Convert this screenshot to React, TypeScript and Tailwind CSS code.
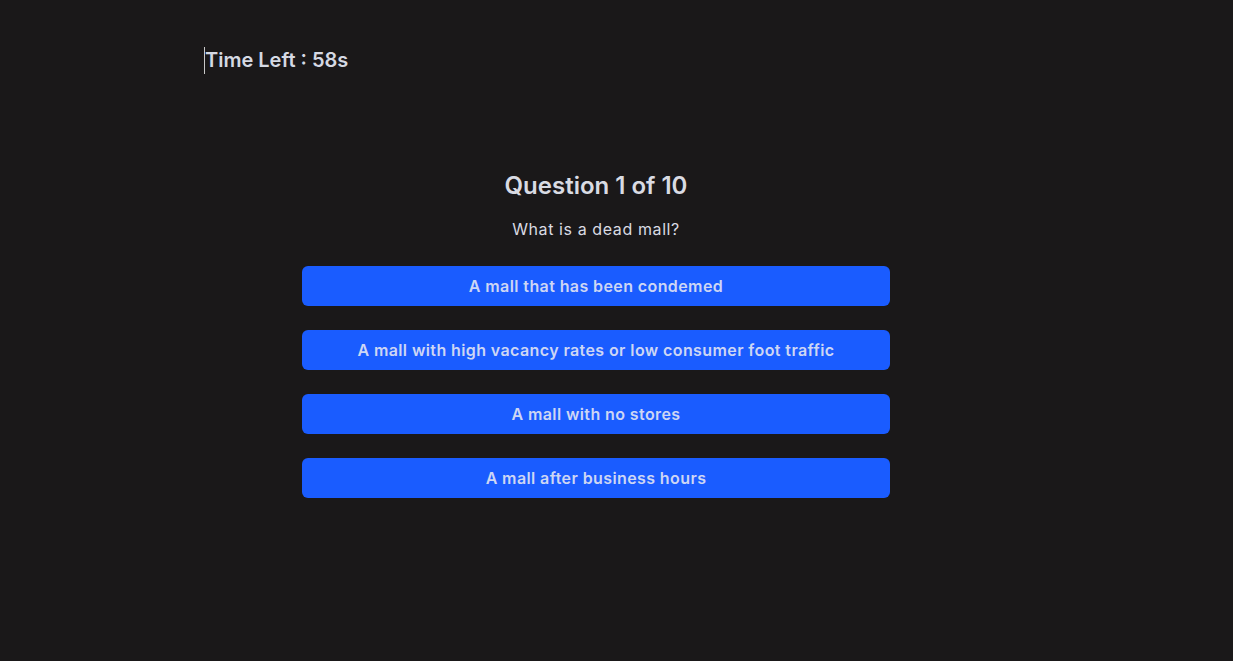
import React from "react";

const answers = [
  "A mall that has been condemed",
  "A mall with high vacancy rates or low consumer foot traffic",
  "A mall with no stores",
  "A mall after business hours",
];

export default function App() {
  return (
    <div
      className="min-h-[661px] w-full bg-[#1a1819] text-[#d9dbe3]"
      style={{ fontFamily: "Inter, 'Noto Sans', sans-serif" }}
    >
      <div className="ml-[204px] w-[784px] pt-[46px]">
        <div className="flex items-center">
          <span className="h-[27px] w-px bg-[#c8c8c8]" />
          <span className="text-[20px] font-semibold leading-[28px] text-[#d5d9e3]">Time Left : 58s</span>
        </div>
        <div className="mt-[96px] flex flex-col items-center">
          <h2 className="text-[24px] font-semibold leading-[32px] text-[#d9dbe3]">Question 1 of 10</h2>
          <p className="mt-[15px] text-[16px] leading-[24px] tracking-[0.6px] text-[#d9dbe3]">What is a dead mall?</p>
          <div className="mt-[25px] flex w-[588px] flex-col gap-[24px]">
            {answers.map((a) => (
              <button
                key={a}
                className="h-[40px] w-full rounded-[6px] bg-[#1a5cff] text-[16px] font-semibold tracking-[0.4px] text-[#cdd6f4]"
              >
                {a}
              </button>
            ))}
          </div>
        </div>
      </div>
    </div>
  );
}
